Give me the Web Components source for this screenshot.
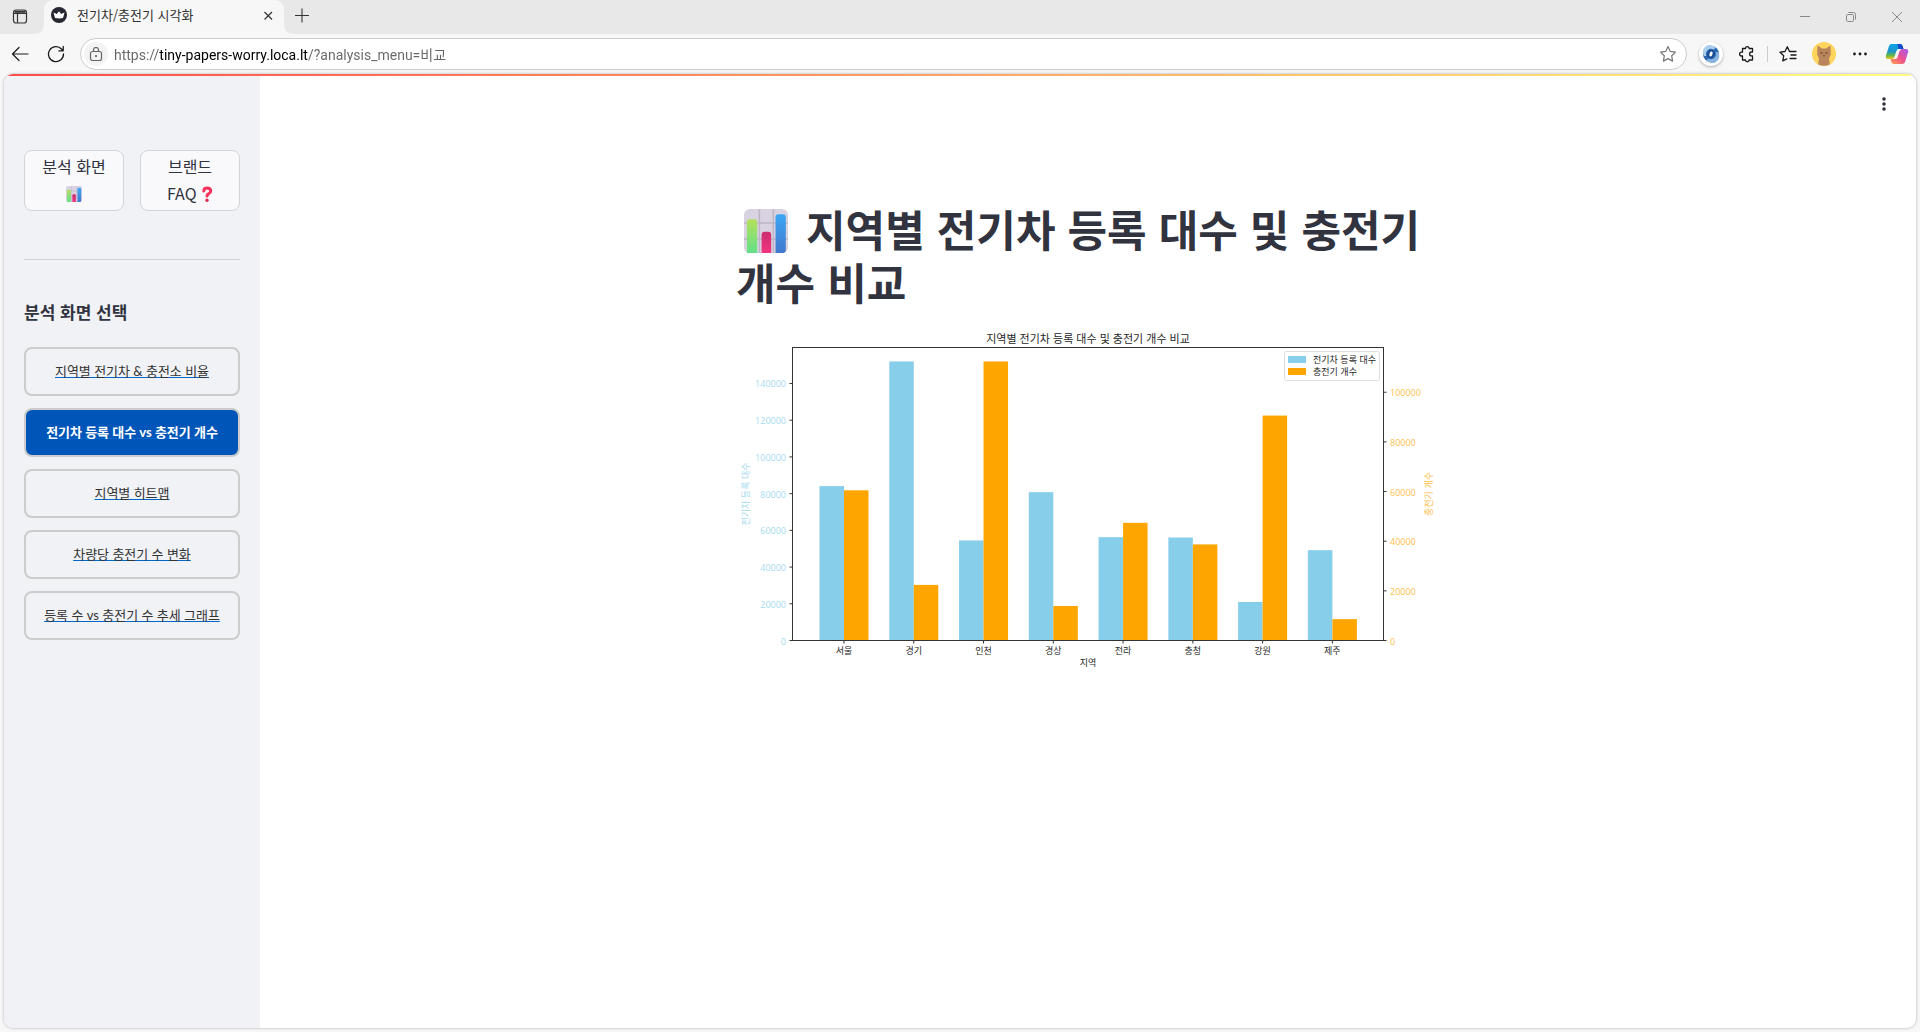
<!DOCTYPE html>
<html lang="ko">
<head>
<meta charset="utf-8">
<title>전기차/충전기 시각화</title>
<style>
html,body{height:100%;margin:0}
body{font-family:"Noto Sans","Noto Sans CJK KR",sans-serif;background:#f7f7f7;overflow:hidden}
</style>
</head>
<body>
<browser-window>
  <tab-strip slot="tabs">전기차/충전기 시각화</tab-strip>
  <tool-bar slot="tools" url="https://tiny-papers-worry.loca.lt/?analysis_menu=비교"></tool-bar>
  <side-bar slot="side">
    <mode-button slot="modes">분석 화면 <emoji-icon name="chart"></emoji-icon></mode-button>
    <mode-button slot="modes">브랜드 FAQ <emoji-icon name="question"></emoji-icon></mode-button>
    <span slot="heading">분석 화면 선택</span>
    <nav-link>지역별 전기차 &amp; 충전소 비율</nav-link>
    <nav-link active>전기차 등록 대수 vs 충전기 개수</nav-link>
    <nav-link>지역별 히트맵</nav-link>
    <nav-link>차량당 충전기 수 변화</nav-link>
    <nav-link>등록 수 vs 충전기 수 추세 그래프</nav-link>
  </side-bar>
  <report-view>
    <page-title><emoji-icon name="chart"></emoji-icon> 지역별 전기차 등록 대수 및 충전기 개수 비교</page-title>
    <bar-chart></bar-chart>
  </report-view>
</browser-window>
<script>
const define = (name, html, setup) => customElements.define(name, class extends HTMLElement {
  connectedCallback() {
    if (this.shadowRoot) return;
    this.attachShadow({ mode: 'open' }).innerHTML = html;
    if (setup) setup(this, this.shadowRoot);
  }
});

define('browser-window', `
<style>
:host{display:flex;flex-direction:column;height:100vh}
main{flex:1;display:flex;flex-direction:column;min-height:0;margin:0 4px 4px;border-radius:9px;overflow:hidden;background:#fff;box-shadow:0 0 3px rgba(0,0,0,.3)}
.stripe{height:2px;flex:none;background:linear-gradient(90deg,#ff4b4b,#fffd80)}
.row{flex:1;display:flex;min-height:0}
</style>
<slot name="tabs"></slot><slot name="tools"></slot>
<main><div class="stripe"></div><div class="row"><slot name="side"></slot><slot></slot></div></main>`);

define('tab-strip', `
<style>
:host{display:flex;height:34px;background:#e8e8e8;color:#333;font-family:"Noto Sans CJK KR",sans-serif;font-size:13px;line-height:18px}
button{border:0;background:none;padding:0;display:flex;align-items:center;justify-content:center;flex:none}
.panel{width:40px}
.tab{position:relative;display:flex;align-items:center;width:240px;margin-left:4px;box-sizing:border-box;padding:0 8px 4px 7px;background:#f7f7f7;border-radius:9px 9px 0 0}
.tab:before,.tab:after{content:"";position:absolute;bottom:0;width:8px;height:8px}
.tab:before{right:100%;background:radial-gradient(circle at 0 0,#0000 7px,#f7f7f7 8px)}
.tab:after{left:100%;background:radial-gradient(circle at 100% 0,#0000 7px,#f7f7f7 8px)}
.name{flex:1;margin-left:10px}
.new{width:36px;padding-bottom:4px}
.space{flex:1}
.win{width:46px}
svg{display:block;fill:none;stroke:#333}
.win svg{stroke:#888}
</style>
<button class="panel" aria-label="탭 작업"><svg width="16" height="16" viewBox="0 0 16 16" stroke-width="1.2"><rect x="1.500" y="1" width="13" height="13" rx="2.500"/><path d="M2 4.500h12M5.500 4.500v9.500"/><path d="M2.500 2.800h11" stroke-width="2"/></svg></button>
<div class="tab"><svg width="16" height="16" viewBox="0 0 16 16"><circle cx="8" cy="8" r="8" fill="#262730" stroke="none"/><path d="M2.500 5.500L5.800 7 8 4.300 10.200 7l3.300-1.500L12 11q-4 .8-8 0z" fill="#fff" stroke="none"/></svg>
<span class="name"><slot></slot></span>
<button class="close" aria-label="탭 닫기"><svg width="16" height="16" viewBox="0 0 16 16" stroke-width="1.2"><path d="M4.500 5l7.500 7.500M12 5l-7.500 7.500"/></svg></button></div>
<button class="new" aria-label="새 탭"><svg width="16" height="16" viewBox="0 0 16 16" stroke-width="1.1"><path d="M8 1.500v14M1 8.500h14"/></svg></button>
<div class="space"></div>
<button class="win" aria-label="최소화"><svg width="12" height="12" viewBox="0 0 12 12"><path d="M1 5.500h10"/></svg></button>
<button class="win" aria-label="이전 크기로"><svg width="12" height="12" viewBox="0 0 12 12"><rect x="1.500" y="3.500" width="7" height="7" rx="1.200"/><path d="M3.500 1.500h5q2 0 2 2v5"/></svg></button>
<button class="win" aria-label="닫기"><svg width="12" height="12" viewBox="0 0 12 12"><path d="M1 1l10 10M11 1L1 11"/></svg></button>`);

define('tool-bar', `
<style>
:host{display:flex;align-items:center;height:40px;box-sizing:border-box;padding-right:4px;background:#f7f7f7}
button{border:0;background:none;padding:0;display:flex;align-items:center;justify-content:center;flex:none;height:32px;width:36px}
.back{margin-left:2px}
.reload{margin-right:6px}
.bar{flex:1;display:flex;align-items:center;height:32px;box-sizing:border-box;border:1px solid #ccc;border-radius:16px;background:#fff;padding-left:3px}
.lock{width:24px;height:24px;border-radius:12px;background:#f3f3f3}
input{flex:1;min-width:0;height:24px;border:0;outline:0;padding:0;margin-left:6px;font:14px/20px Roboto,"Noto Sans CJK KR",sans-serif;color:#111;-webkit-text-fill-color:transparent;background:linear-gradient(90deg,#666 var(--from),#000 var(--from),#000 var(--to),#666 var(--to));-webkit-background-clip:text;background-clip:text}
.ext{width:24px;height:24px;margin:0 6px 0 12px;border-radius:12px;background:#fff;box-shadow:0 1px 3px rgba(0,0,0,.3)}
.sep{width:1px;height:16px;background:#ccc;margin:0 2px}
svg{display:block;fill:none;stroke:#1a1a1a;stroke-linecap:round;stroke-linejoin:round}
.lock svg{stroke:#666}
.copilot{width:38px}
</style>
<button class="back" aria-label="뒤로"><svg width="18" height="18" viewBox="0 0 18 18" stroke-width="1.200"><path d="M17 9H1.500M8 2.500L1.500 9 8 15.500"/></svg></button>
<button class="reload" aria-label="새로 고침"><svg width="18" height="18" viewBox="0 0 18 18" stroke-width="1.300"><path d="M16.500 9A7.500 7.500 0 1 1 14.500 4L16 5.500M16.200 1.500v4.300h-4.300"/></svg></button>
<div class="bar"><button class="lock" aria-label="사이트 정보"><svg width="14" height="14" viewBox="0 0 14 14" stroke-width="1.200"><rect x="1.500" y="4.500" width="11" height="9" rx="2"/><path d="M4.500 4.500V3a2.500 2.500 0 0 1 5 0v1.500"/><circle cx="7" cy="9" r=".5" fill="#666"/></svg></button>
<input aria-label="주소" spellcheck="false">
<button aria-label="즐겨찾기 추가"><svg width="18" height="18" viewBox="0 0 18 18" style="stroke:#777" stroke-width="1.200"><path d="M9 1.500l2.300 4.900 5.200.7-3.800 3.700.9 5.300L9 13.600l-4.600 2.500.9-5.300L1.500 7.100l5.200-.7z"/></svg></button></div>
<button class="ext" aria-label="확장"><svg width="18" height="18" viewBox="0 0 18 18" style="stroke:none"><circle cx="9" cy="9" r="8" fill="#2b67ae"/><path d="M2 11A7 7 0 0 1 13.500 3l-2 1.500A5 5 0 0 0 4.500 11z" fill="#a9cdec"/><path d="M16 7a7 7 0 0 1-11.500 8l2-1.500a5 5 0 0 0 7-6.500z" fill="#86b2de"/><ellipse cx="9" cy="9" rx="3.600" ry="4.200" transform="rotate(25 9 9)" fill="#174b93"/><ellipse cx="9" cy="9" rx="1.500" ry="2.600" transform="rotate(20 9 9)" fill="#fff"/></svg></button>
<button aria-label="확장 프로그램"><svg width="18" height="18" viewBox="0 0 18 18" stroke-width="1.300"><path d="M4.500 3.500h3a1.800 1.800 0 0 1 3.600 0h3.400V7h-1a1.900 1.900 0 0 0 0 3.800h1V15h-3.400a1.800 1.800 0 0 1-3.600 0h-3v-4h-1a1.900 1.900 0 0 1 0-3.800h1z"/></svg></button>
<span class="sep"></span>
<button aria-label="즐겨찾기"><svg width="18" height="18" viewBox="0 0 18 18" stroke-width="1.300"><path d="M11.500 6.500h-1L8.300 1.800 6 6.500l-5 .7 3.700 3.600-.9 5.100 4-2M11.500 6.500H17M12 10h5M11 13.500h6"/></svg></button>
<button aria-label="프로필"><svg width="24" height="24" viewBox="0 0 24 24" style="stroke:none"><circle cx="12" cy="12" r="12" fill="#ffd45c"/><path d="M5.500 3.500L10 6.500h4l4.500-3 .3 9-1.800 4 .8 6q-5.800 2.600-11.600 0l.8-6-1.800-4z" fill="#b9855d"/><circle cx="9.500" cy="11" r=".8" fill="#47301f"/><circle cx="14.500" cy="11" r=".8" fill="#47301f"/><path d="M11 13.500h2l-1 1z" fill="#47301f"/></svg></button>
<button aria-label="설정 및 기타"><svg width="16" height="16" viewBox="0 0 16 16" style="fill:#1a1a1a;stroke:none"><circle cx="2.500" cy="8" r="1.400"/><circle cx="8" cy="8" r="1.400"/><circle cx="13.500" cy="8" r="1.400"/></svg></button>
<button class="copilot" aria-label="Copilot"><svg width="24" height="22" viewBox="0 0 24 22" style="stroke:none"><defs><linearGradient id="a" x1="0" y1="0" x2="0" y2="1"><stop offset="0" stop-color="#0aa5e8"/><stop offset=".5" stop-color="#2196c8"/><stop offset=".75" stop-color="#5cb648"/><stop offset="1" stop-color="#f0c419"/></linearGradient><linearGradient id="b" x1="1" y1="0" x2="0" y2="1"><stop offset="0" stop-color="#a45cf0"/><stop offset=".5" stop-color="#ee5093"/><stop offset="1" stop-color="#ffa245"/></linearGradient></defs><path d="M6.500 1H15q2 0 2.600 2l.9 3H14q-2 0-2.600 2l-2 6q-.8 2-2.900 2H3Q0 16 1 12.500L4 3q.6-2 2.500-2z" fill="url(#a)"/><path d="M12.500 1H15q2 0 2.600 2l.9 3h-5z" fill="#1848c8"/><path d="M17.500 21H9q-2 0-2.600-2l-.9-3H10q2 0 2.600-2l2-6q.8-2 2.900-2H21q3 0 2 3.500L20 19q-.6 2-2.500 2z" fill="url(#b)"/></svg></button>`,
(el, root) => {
  // The host part of the address is drawn darker than the scheme and the path.
  const input = root.querySelector('input'), url = el.getAttribute('url');
  input.value = url;
  const pen = document.createElement('canvas').getContext('2d');
  pen.font = '14px Roboto, "Noto Sans CJK KR", sans-serif';
  const start = url.indexOf('//') + 2, end = url.indexOf('/', start);
  input.style.setProperty('--from', Math.round(pen.measureText(url.slice(0, start)).width) + 'px');
  input.style.setProperty('--to', Math.round(pen.measureText(url.slice(0, end)).width) + 'px');
});

define('side-bar', `
<style>
:host{display:block;width:256px;flex:none;box-sizing:border-box;padding:74px 20px 0;background:#f0f2f6}
.modes{display:grid;grid-template-columns:1fr 1fr;gap:16px}
hr{border:0;border-top:1px solid #cfd0d4;margin:48px 0 38px}
h3{margin:0 0 21px;font-size:17px;line-height:28px;font-weight:700;color:#31333f;font-family:"Noto Sans CJK KR",sans-serif}
nav{display:flex;flex-direction:column;gap:12px}
</style>
<div class="modes"><slot name="modes"></slot></div><hr><h3><slot name="heading"></slot></h3><nav><slot></slot></nav>`);

define('mode-button', `
<style>
:host{display:block}
button{width:100%;box-sizing:border-box;border:1px solid #d3d4d9;border-radius:8px;background:#f9f9fb;padding:2px 16px 3px;color:#31333f;font:16px/27px "Noto Sans CJK KR",sans-serif;word-break:keep-all}
</style><button><slot></slot></button>`);

define('nav-link', `
<style>
:host{display:block}
a{display:block;box-sizing:border-box;border:2px solid #ccc;border-radius:8px;padding:11px 8px 12px;text-align:center;font:13px/22px Lato,"Noto Sans CJK KR",sans-serif;color:#333;text-decoration:underline #0068c9;white-space:nowrap}
:host([active]) a{background:#0056b8;color:#fff;font-weight:700}
</style><a href="#"><slot></slot></a>`);

define('emoji-icon', '', (el, root) => {
  const art = {
    chart: `<svg viewBox="1 1 30 30"><defs><linearGradient id="g" x2="0" y2="1"><stop stop-color="#b5e05c"/><stop offset="1" stop-color="#62e089"/></linearGradient><linearGradient id="p" x2="0" y2="1"><stop stop-color="#cc2d6c"/><stop offset="1" stop-color="#f0357f"/></linearGradient><linearGradient id="u" x2="0" y2="1"><stop stop-color="#3ca7f6"/><stop offset="1" stop-color="#4278cc"/></linearGradient></defs><rect x="1" y="1" width="30" height="30" rx="4" fill="#d9d2e0"/><path d="M11.500 1v30M21 1v30M1 10.500h30M1 21.500h30" stroke="#bdb4c6" fill="none"/><path d="M3 31V10q0-2 2-2h3q2 0 2 2v21z" fill="url(#g)"/><path d="M13 31V18.500q0-2 2-2h2.500q2 0 2 2V31z" fill="url(#p)"/><path d="M22.500 31V6.500q0-2 2-2h3q2 0 2 2V29q0 2-2 2z" fill="url(#u)"/></svg>`,
    question: `<svg viewBox="4 0 24 32"><path d="M9.500 10q.5-6 6.500-6 7.500 0 7.500 6 0 3.500-4 5.500-3.500 1.500-3.500 4.500" fill="none" stroke="#f5325b" stroke-width="6" stroke-linecap="round"/><circle cx="16" cy="28.500" r="3.300" fill="#e02950"/></svg>`
  };
  root.innerHTML = `<style>:host{display:inline-block;width:1em;height:1em;vertical-align:-2px}:host([name=question]){width:12px}svg{display:block;width:100%;height:100%}</style>` + art[el.getAttribute('name')];
});

define('report-view', `
<style>
:host{flex:1;min-width:0;display:flex;flex-direction:column;align-items:center;position:relative}
article{width:100%;max-width:704px;padding-top:126px}
.menu{position:absolute;right:24px;top:20px;width:16px;height:16px;border:0;padding:0;background:none}
svg{display:block;fill:#31333f}
</style>
<button class="menu" aria-label="메뉴"><svg width="16" height="16" viewBox="0 0 16 16"><circle cx="8" cy="3" r="1.800"/><circle cx="8" cy="8" r="1.800"/><circle cx="8" cy="13" r="1.800"/></svg></button>
<article><slot></slot></article>`);

define('page-title', `
<style>
:host{display:block}
h1{margin:0 0 22px;color:#31333f;font:700 43px/53px "Noto Sans CJK KR",sans-serif;word-break:keep-all}
::slotted(emoji-icon){width:44px;height:44px;margin:0 6px 0 8px;vertical-align:-6px}
</style><h1><slot></slot></h1>`);

define('bar-chart', `
<style>
:host{display:block}
svg{display:block;width:100%;height:auto;font:9px "Noto Sans CJK KR",sans-serif;fill:#262626}
.num{font-family:"Open Sans",sans-serif}
.axis{stroke:#333;fill:none}
</style><svg viewBox="0 0 704 352" role="img" aria-label="지역별 전기차 등록 대수 및 충전기 개수 비교"></svg>`,
(el, root) => {
  const regions = ['서울','경기','인천','경상','전라','충청','강원','제주'];
  const cars = [84100,152000,54500,80800,56300,56100,21000,49200];
  const chargers = [60500,22400,112400,13900,47400,38700,90600,8600];
  const L = 56.5, R = 647.5, T = 17.5, B = 310.5, W = 24.5, carMax = 159600, chargerMax = 118020;
  const scale = (v, max) => v / max * (B - T);
  let s = '';
  regions.forEach((r, i) => {
    const x = 108 + i * 69.77, a = scale(cars[i], carMax), b = scale(chargers[i], chargerMax);
    s += `<rect x="${x - W}" y="${B - a}" width="${W}" height="${a}" fill="#87ceeb"/><rect x="${x}" y="${B - b}" width="${W}" height="${b}" fill="#ffa500"/>`;
    s += `<path class="axis" d="M${x} ${B}v3"/><text x="${x}" y="324" text-anchor="middle">${r}</text>`;
  });
  for (let v = 0; v <= 140000; v += 20000) {
    const y = B - scale(v, carMax);
    s += `<path class="axis" d="M${L} ${y}h-3"/><text class="num" x="50" y="${y + 4}" text-anchor="end" fill="#a5daf0">${v}</text>`;
  }
  for (let v = 0; v <= 100000; v += 20000) {
    const y = B - scale(v, chargerMax);
    s += `<path class="axis" d="M${R} ${y}h3"/><text class="num" x="654" y="${y + 4}" fill="#ffbe4a">${v}</text>`;
  }
  s += `<rect class="axis" x="${L}" y="${T}" width="${R - L}" height="${B - T}"/>
  <text x="352" y="13" text-anchor="middle" font-size="11">지역별 전기차 등록 대수 및 충전기 개수 비교</text>
  <text x="352" y="336" text-anchor="middle">지역</text>
  <text transform="translate(13 164) rotate(-90)" text-anchor="middle" fill="#a5daf0">전기차 등록 대수</text>
  <text transform="translate(696 164) rotate(-90)" text-anchor="middle" fill="#ffbe4a">충전기 개수</text>
  <rect x="548.5" y="21.5" width="95" height="29" rx="2" fill="#fff" stroke="#ddd"/>
  <rect x="552" y="26" width="18" height="7" fill="#87ceeb"/><rect x="552" y="38" width="18" height="7" fill="#ffa500"/>
  <text x="577" y="33">전기차 등록 대수</text><text x="577" y="45">충전기 개수</text>`;
  root.querySelector('svg').innerHTML = s;
});
</script>
</body>
</html>
